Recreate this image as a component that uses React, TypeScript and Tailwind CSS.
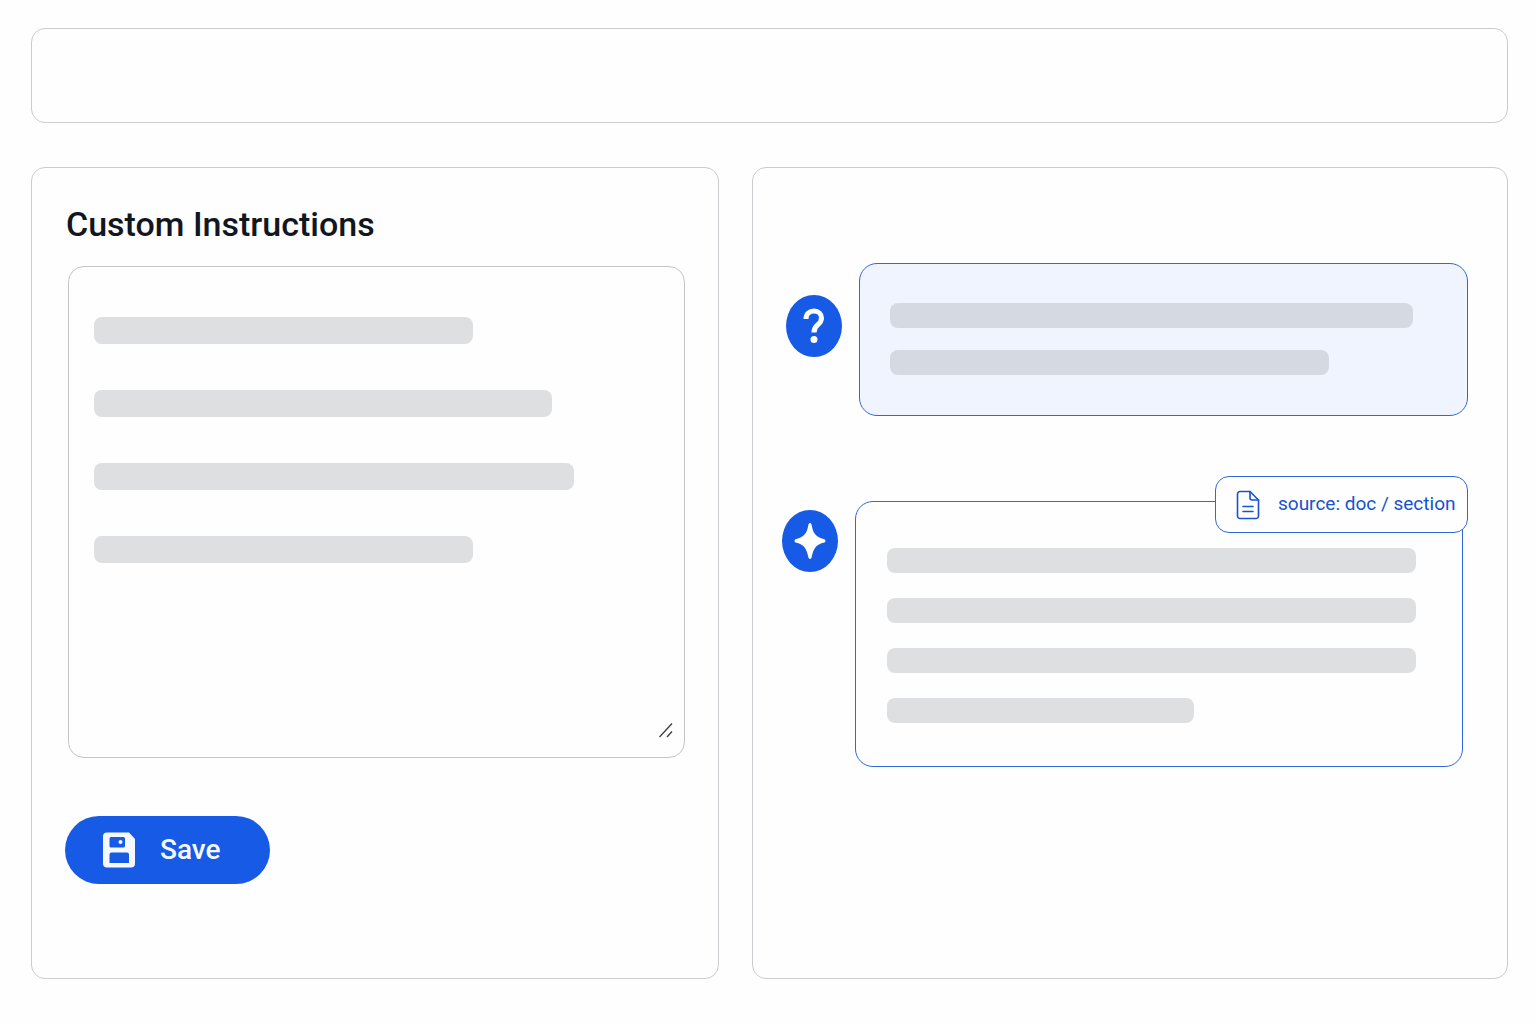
import type { ReactNode } from 'react';
import clsx from 'clsx';

const instructionBars = ['w-[67%]', 'w-[81%]', 'w-[85%]', 'w-[67%]'];
const questionBars = ['w-full', 'w-[84%]'];
const answerBars = ['w-full', 'w-full', 'w-full', 'w-[58%]'];

function Bar({ className }: { className: string }) {
  return <div className={clsx('rounded-lg', className)} />;
}

function SaveIcon() {
  return (
    <svg width="34" height="36" viewBox="0 0 34 36" aria-hidden="true">
      <path
        fill="#f5f9ff"
        fillRule="evenodd"
        d="M5 0.5H27L33 7V31.500a4 4 0 0 1-4 4H5A4 4 0 0 1 1 31.500V4.500A4 4 0 0 1 5 0.500ZM9 5Q7.500 5 7.500 6.500V14Q7.500 15.500 9 15.500H21.500Q23 15.500 23 14V6.500Q23 5 21.500 5ZM9.500 20.500Q7.500 20.500 7.500 22.500V31H27V22.500Q27 20.500 25 20.500Z"
      />
      <circle cx="18.5" cy="10" r="2" fill="#f5f9ff" />
    </svg>
  );
}

function QuestionIcon() {
  return (
    <svg width="22" height="36" viewBox="0 0 22 36" fill="none" aria-hidden="true">
      <path
        d="M3 11C3 6 6.5 3 11 3C15.5 3 18.5 6 18.5 10C18.5 13 17 15 14.5 17C12 19 11 20.5 11 24.5"
        stroke="#fff"
        strokeWidth="5"
      />
      <circle cx="11" cy="31.5" r="3.5" fill="#fff" />
    </svg>
  );
}

function SparkIcon() {
  return (
    <svg width="32" height="38" viewBox="0 0 32 38" aria-hidden="true">
      <path
        fill="#fff"
        d="M14.5 2.2Q16 -0.2 17.5 2.2C19 10.5 20.5 14.5 30.5 17.3Q32.5 19 30.5 20.5C21.5 22.5 19.5 26.5 17.5 35.8Q16 38.2 14.5 35.8C12.5 26.5 10.5 22.5 1.5 20.5Q-0.5 19 1.5 17.3C11.5 14.5 13 10.5 14.5 2.2Z"
      />
    </svg>
  );
}

function DocIcon() {
  return (
    <svg
      width="24"
      height="30"
      viewBox="0 0 24 30"
      fill="none"
      stroke="#1553d0"
      strokeWidth="1.6"
      strokeLinecap="round"
      strokeLinejoin="round"
      aria-hidden="true"
    >
      <path d="M14 1.5H4A2.5 2.5 0 0 0 1.5 4V26A2.5 2.5 0 0 0 4 28.5H20A2.5 2.5 0 0 0 22.5 26V10Z" />
      <path d="M14 1.5V8A2 2 0 0 0 16 10H22.5" />
      <path d="M7 16.5H17M7 21.5H17" />
    </svg>
  );
}

function Avatar({ className, children }: { className: string; children: ReactNode }) {
  return (
    <div
      className={clsx(
        'flex h-[62px] w-14 shrink-0 items-center justify-center rounded-[50%] bg-[#165ae6]',
        className,
      )}
    >
      {children}
    </div>
  );
}

function InstructionsPanel() {
  return (
    <section className="rounded-[14px] border border-[#cbccd0] px-[33px] pt-9 pb-[94px]">
      <h1 className="pl-px text-[34px] leading-10 font-medium text-[#12161f]">
        <label htmlFor="instructions">Custom Instructions</label>
      </h1>

      <div className="mt-[22px] ml-[3px] grid">
        <textarea
          id="instructions"
          className="col-start-1 row-start-1 h-[492px] w-full resize-none rounded-2xl border border-[#c4c5c8] px-6 py-10 text-xl outline-none"
        />
        <div className="pointer-events-none col-start-1 row-start-1 flex flex-col gap-[46px] px-[26px] pt-[51px]">
          {instructionBars.map((width, i) => (
            <Bar key={i} className={clsx('h-[27px] bg-[#dedfe1]', width)} />
          ))}
        </div>
        <svg
          className="pointer-events-none col-start-1 row-start-1 mr-3 mb-5 self-end justify-self-end"
          width="14"
          height="15"
          viewBox="0 0 14 15"
          stroke="#3c3d40"
          strokeWidth="1.3"
          aria-hidden="true"
        >
          <path d="M0.5 14L13 0.5M8 14L13 8.5" />
        </svg>
      </div>

      <button
        type="button"
        className="mt-[58px] flex h-[68px] w-[205px] items-center gap-6 rounded-full bg-[#165ae6] pl-[37px] text-[28px] font-medium text-[#f5f9ff]"
      >
        <SaveIcon />
        Save
      </button>
    </section>
  );
}

function PreviewPanel() {
  return (
    <section className="rounded-[14px] border border-[#cbccd0] pt-[95px] pr-[39px] pb-10 pl-[29px]">
      <div className="flex gap-[17px] pl-1">
        <Avatar className="mt-8">
          <QuestionIcon />
        </Avatar>
        <div className="flex flex-1 flex-col gap-[22px] rounded-[18px] border border-[#2f68da] bg-[#eff4ff] pt-[39px] pr-[54px] pb-10 pl-[30px]">
          {questionBars.map((width, i) => (
            <Bar key={i} className={clsx('h-[25px] bg-[#d5d9e2]', width)} />
          ))}
        </div>
      </div>

      <div className="mt-[85px] flex gap-[17px] pr-[5px]">
        <Avatar className="mt-[9px]">
          <SparkIcon />
        </Avatar>
        <div className="relative flex flex-1 flex-col gap-[25px] rounded-[18px] border border-[#2f68da] pt-[46px] pr-[46px] pb-[43px] pl-[31px]">
          {answerBars.map((width, i) => (
            <Bar key={i} className={clsx('h-[25px] bg-[#dedfe1]', width)} />
          ))}
          <a
            href="#source"
            className="absolute -top-[26px] -right-[6px] flex h-[57px] w-[253px] items-center gap-[18px] rounded-[14px] border border-[#2f68da] bg-[#fefefe] pl-5 text-[19px] whitespace-nowrap text-[#1553d0]"
          >
            <DocIcon />
            source: doc / section
          </a>
        </div>
      </div>
    </section>
  );
}

export default function App() {
  return (
    <div className="min-h-screen bg-[#fefefe] pt-7 pr-7 pb-11 pl-[31px] font-[Roboto,sans-serif]">
      <header className="h-[95px] rounded-[14px] border border-[#cbccd0]" />
      <main className="mt-11 grid grid-cols-[688fr_756fr] gap-[33px]">
        <InstructionsPanel />
        <PreviewPanel />
      </main>
    </div>
  );
}
